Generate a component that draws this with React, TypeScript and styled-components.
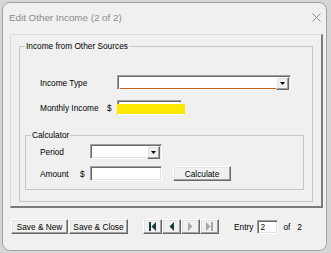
import React from "react";
import styled, { createGlobalStyle, css } from "styled-components";

const Global = createGlobalStyle`
  html, body { margin: 0; padding: 0; background: #d6d6d6; }
  body { font-family: "Liberation Sans", Arial, sans-serif; }
  #root { width: 331px; height: 253px; overflow: hidden; }
`;

const raised = css`
  border-style: solid;
  border-width: 1px;
  border-color: #ffffff #696969 #696969 #ffffff;
  box-shadow: inset -1px -1px 0 #a0a0a0, inset 1px 1px 0 #e3e3e3;
  background: #f0f0f0;
`;

const sunken = css`
  border-style: solid;
  border-width: 1px;
  border-color: #a0a0a0 #ffffff #ffffff #a0a0a0;
  box-shadow: inset 1px 1px 0 #696969, inset -1px -1px 0 #e3e3e3;
  background: #ffffff;
`;

const Window = styled.div`
  box-sizing: border-box;
  margin: 2px 0 0 2px;
  width: 325px;
  height: 249px;
  border: 1px solid #a3a3a3;
  border-radius: 8px;
  background: #f0f0f0;
  display: flex;
  flex-direction: column;
  overflow: hidden;
  font-size: 8.3px;
  color: #000;
`;

const TitleBar = styled.div`
  height: 29px;
  flex: none;
  display: flex;
  align-items: center;
  justify-content: space-between;
  padding: 0 5px 2px 6px;
`;

const Title = styled.span`
  font-size: 9.8px;
  color: #8a8a8a;
`;

const Close = styled.span`
  width: 9px;
  height: 9px;
  display: flex;
`;

const Panel = styled.div`
  box-sizing: border-box;
  margin: 0 3px 0 7px;
  height: 174px;
  flex: none;
  border-style: solid;
  border-width: 1px 2px 2px 1px;
  border-color: #dadada #7a7a7a #7a7a7a #dadada;
  padding: 6px 8px 3px 8px;
  display: flex;
  flex-direction: column;
`;

const Group = styled.fieldset<{ $inset?: string }>`
  margin: ${(p) => p.$inset || "0"};
  padding: 0;
  min-width: 0;
  border: 1px solid #c6c6c6;
  display: flex;
  flex-direction: column;
`;

const Legend = styled.legend`
  padding: 0 1px;
  margin-left: 5px;
  line-height: 10px;
  height: 10px;
`;

const Row = styled.div<{ $cols: string; $mt: number; $pl: number; $mb?: number }>`
  display: grid;
  grid-template-columns: ${(p) => p.$cols};
  align-items: center;
  margin-top: ${(p) => p.$mt}px;
  margin-bottom: ${(p) => p.$mb || 0}px;
  padding-left: ${(p) => p.$pl}px;
  height: 15px;
`;

const Label = styled.span`
  white-space: nowrap;
`;

const Dollar = styled.span``;

const ComboBox = styled.div<{ $w: number }>`
  ${sunken};
  box-sizing: border-box;
  width: ${(p) => p.$w}px;
  height: 15px;
  display: flex;
  padding: 1px;
`;

const ComboText = styled.div<{ $flag?: boolean }>`
  flex: 1;
  box-sizing: border-box;
  margin: 1px 0 0 1px;
  border-bottom: ${(p) => (p.$flag ? "1.5px solid #c8641e" : "none")};
  height: 11px;
`;

const DropButton = styled.div`
  ${raised};
  box-sizing: border-box;
  width: 13px;
  height: 13px;
  display: flex;
  align-items: center;
  justify-content: center;
`;

const TextBox = styled.div<{ $w: number; $h?: number }>`
  ${sunken};
  box-sizing: border-box;
  width: ${(p) => p.$w}px;
  height: ${(p) => p.$h || 15}px;
  position: relative;
  padding: 1px 3px;
  line-height: 11px;
`;

const Highlight = styled.div`
  position: absolute;
  left: -1px;
  top: 3px;
  width: 68px;
  height: 10px;
  background: #fde800;
`;

const Button = styled.button<{ $w: number }>`
  ${raised};
  box-sizing: border-box;
  width: ${(p) => p.$w}px;
  height: 15px;
  padding: 0;
  font: inherit;
  color: #000;
  display: flex;
  align-items: center;
  justify-content: center;
`;

const CalcRow = styled.div`
  display: flex;
  align-items: center;
  gap: 11px;
`;

const Footer = styled.div`
  display: flex;
  align-items: center;
  margin-top: 11px;
  padding-left: 8px;
  height: 15px;
`;

const SaveGroup = styled.div`
  display: flex;
  gap: 1px;
`;

const NavGroup = styled.div`
  display: flex;
  margin-left: 15px;
`;

const NavButton = styled.div`
  ${raised};
  box-sizing: border-box;
  width: 19px;
  height: 15px;
  display: flex;
  align-items: center;
  justify-content: center;
`;

const EntryLabel = styled.span<{ $ml: number }>`
  margin-left: ${(p) => p.$ml}px;
`;

const EntryBox = styled(TextBox)`
  margin-left: 4px;
  padding: 1px 2px;
`;

const Arrow = () => (
  <svg width="5" height="3" viewBox="0 0 5 3">
    <path d="M0 0H5L2.5 3Z" fill="#000" />
  </svg>
);

const NavIcon = ({ kind, on }: { kind: "first" | "prev" | "next" | "last"; on: boolean }) => {
  const c = on ? "#143c3a" : "#a6a6a6";
  let d = "";
  if (kind === "first") d = "M0 0H2V9H0Z M7 0V9L2.5 4.5Z";
  if (kind === "prev") d = "M5 0V9L0.5 4.5Z";
  if (kind === "next") d = "M0 0V9L4.5 4.5Z";
  if (kind === "last") d = "M0 0V9L4.5 4.5Z M5 0H7V9H5Z";
  const w = kind === "first" || kind === "last" ? 7 : 5;
  return (
    <svg width={w} height="9" viewBox={`0 0 ${w} 9`}>
      <path d={d} fill={c} />
    </svg>
  );
};

export default function App() {
  return (
    <>
      <Global />
      <Window>
        <TitleBar>
          <Title>Edit Other Income (2 of 2)</Title>
          <Close>
            <svg width="9" height="9" viewBox="0 0 9 9">
              <path d="M0.5 0.5L8.5 8.5M8.5 0.5L0.5 8.5" stroke="#8e8e8e" strokeWidth="1" />
            </svg>
          </Close>
        </TitleBar>
        <Panel>
          <Group>
            <Legend>Income from Other Sources</Legend>
            <Row $cols="67px 10px 1fr" $mt={24} $pl={20}>
              <Label>Income Type</Label>
              <span />
              <ComboBox $w={174}>
                <ComboText $flag />
                <DropButton>
                  <Arrow />
                </DropButton>
              </ComboBox>
            </Row>
            <Row $cols="67px 10px 1fr" $mt={10} $pl={20}>
              <Label>Monthly Income</Label>
              <Dollar>$</Dollar>
              <TextBox $w={65}>
                <Highlight />
              </TextBox>
            </Row>
            <Group $inset="15px 8px 11px 5px">
              <Legend>Calculator</Legend>
              <Row $cols="40px 10px 1fr" $mt={4} $pl={14}>
                <Label>Period</Label>
                <span />
                <ComboBox $w={72}>
                  <ComboText />
                  <DropButton>
                    <Arrow />
                  </DropButton>
                </ComboBox>
              </Row>
              <Row $cols="40px 10px 1fr" $mt={7} $pl={14} $mb={8}>
                <Label>Amount</Label>
                <Dollar>$</Dollar>
                <CalcRow>
                  <TextBox $w={72} />
                  <Button $w={58}>Calculate</Button>
                </CalcRow>
              </Row>
            </Group>
          </Group>
        </Panel>
        <Footer>
          <SaveGroup>
            <Button $w={57}>Save &amp; New</Button>
            <Button $w={59}>Save &amp; Close</Button>
          </SaveGroup>
          <NavGroup>
            <NavButton>
              <NavIcon kind="first" on />
            </NavButton>
            <NavButton>
              <NavIcon kind="prev" on />
            </NavButton>
            <NavButton>
              <NavIcon kind="next" on={false} />
            </NavButton>
            <NavButton>
              <NavIcon kind="last" on={false} />
            </NavButton>
          </NavGroup>
          <EntryLabel $ml={15}>Entry</EntryLabel>
          <EntryBox $w={21} $h={14}>2</EntryBox>
          <EntryLabel $ml={5}>of</EntryLabel>
          <EntryLabel $ml={7}>2</EntryLabel>
        </Footer>
      </Window>
    </>
  );
}
